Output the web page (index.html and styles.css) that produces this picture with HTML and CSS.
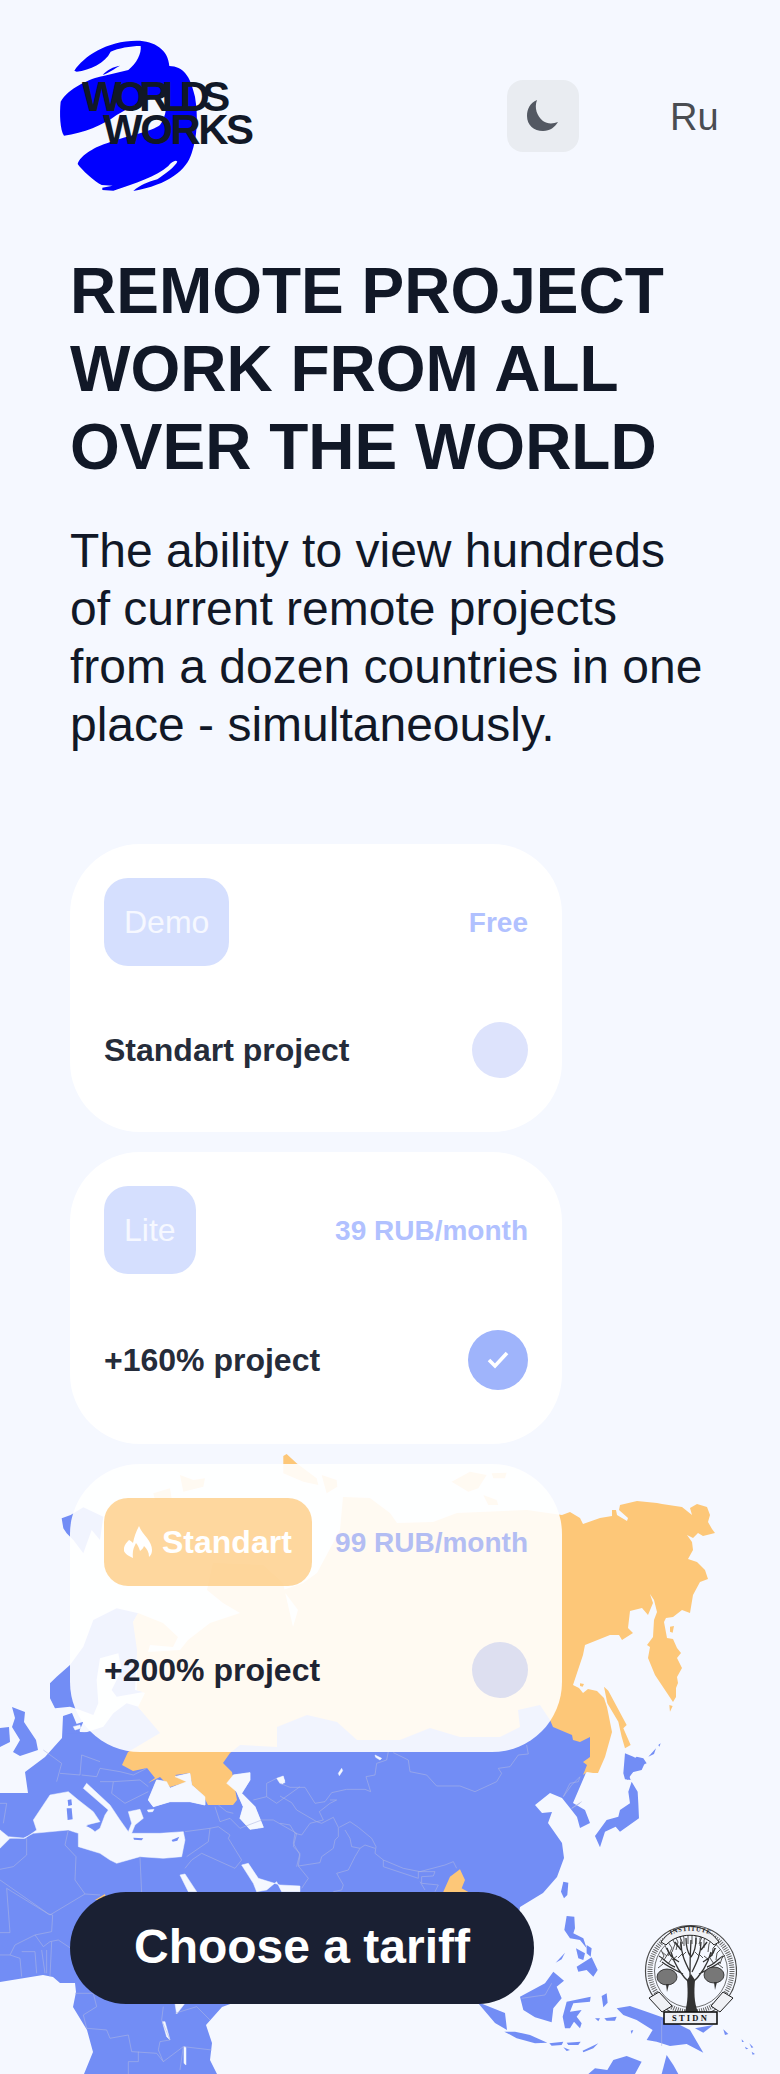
FILE: index.html
```html
<!DOCTYPE html>
<html lang="en">
<head>
<meta charset="utf-8">
<title>Worlds Works</title>
<link rel="stylesheet" href="styles.css">
</head>
<body>
<svg class="map" viewBox="0 0 780 2074" aria-hidden="true">
  <!-- land -->
  <g class="land">
    <path d="M0 1793L28 1793L25 1772L45 1757L62 1738L63 1716L72 1713L80 1732L110 1733L160 1700L590 1700L590 1760L585 1775L573 1803L585 1810L590 1823L580 1828L577 1817L570 1808L562 1798L550 1793L535 1805L542 1813L552 1812L548 1823L562 1843L564 1858L557 1877L543 1893L520 1907L505 1990L480 2003L505 2013L507 2030L495 2023L478 2003L233 2003L222 2007L206 2025L212 2043L210 2060L217 2074L84 2074L93 2052L87 2030L73 2007L76 1992L75 1983L60 1983L53 1977L43 1975L0 1982Z"/>
    <g transform="translate(50 1450) scale(.3333)">
      <path d="M0 700L20 680L60 645L100 590L130 510L200 475L265 490L250 515L262 590L255 720L285 725L200 740L185 720L215 660L205 610L150 625L140 690L145 760L130 795L90 780L60 770L15 775L0 745Z"/>
      <path d="M190 790L230 760L265 770L330 850L235 905L110 860L100 850L160 830Z"/>
      <path d="M35 205L62 195L100 172L160 200L150 270L125 240L100 310L70 270L50 250L40 235Z"/>
      <path d="M40 810L65 790L70 825L100 815L85 850L50 850Z"/>
    </g>
    <!-- UK, Ireland -->
    <path d="M12 1707L25 1712L24 1722L36 1740L38 1750L20 1756L13 1752L20 1740L12 1727L15 1718Z"/>
    <path d="M0 1728L9 1727L10 1742L0 1747Z"/>
    <g transform="translate(470 1760) scale(.3333)">
      <!-- Hokkaido and Japan -->
      <path d="M462 40L475 10L500 -10L520 -5L530 10L505 20L490 35L472 60Z"/>
      <path d="M485 65L503 95L505 130L507 175L450 215L437 200L405 215L390 262L375 228L410 180L445 170L450 150L480 130L475 95Z"/>
      <!-- Taiwan -->
      <path d="M280 365L295 368L292 405L282 415L273 395Z"/>
      <!-- Philippines -->
      <path d="M290 468L313 470L315 505L310 520L340 535L350 565L330 540L300 535L283 510Z"/>
      <path d="M318 565L345 580L340 600L325 595Z"/>
      <path d="M350 555L365 565L362 590L350 580Z"/>
      <path d="M320 620L365 592L383 630L370 650L350 630L325 635Z"/>
      <path d="M257 608L285 578L275 598Z"/>
      <!-- Borneo -->
      <path d="M150 710L225 670L250 635L282 662L260 680L275 715L250 745L245 787L195 772L160 750Z"/>
      <!-- Sulawesi -->
      <path d="M290 725L362 710L360 725L310 730L300 755L335 750L320 770L335 790L330 805L312 785L300 805L285 805L278 770Z"/>
      <path d="M395 708L410 700L413 728L400 742Z"/>
      <!-- New Guinea -->
      <path d="M440 745L480 738L530 755L600 780L660 810L700 878L650 852L600 858L560 845L530 840L548 810L500 780L460 765Z"/>
      <path d="M675 805L730 795L700 818Z"/>
      <!-- Java, lesser islands -->
      <path d="M103 815L135 815L180 825L232 848L195 850L140 835Z"/>
      <path d="M238 850L280 845L275 855L245 857Z"/>
      <path d="M290 848L332 845L325 855L295 855Z"/>
      <path d="M280 862L300 870L290 873Z"/>
      <path d="M338 872L385 850L370 865L340 877Z"/>
      <path d="M375 775L390 775L385 784Z"/>
      <path d="M403 775L440 770L435 782L410 782Z"/>
      <path d="M482 812L490 810L485 822Z"/>
      <path d="M760 808L775 822L765 825Z"/>
      <path d="M838 850L850 862L845 864Z"/>
      <path d="M825 860L835 866L828 868Z"/>
      <path d="M845 875L855 882L848 884Z"/>
      <path d="M815 838L822 845L816 846Z"/>
      <!-- Australia -->
      <path d="M355 942L375 925L412 930L430 900L470 888L515 905L495 942Z"/>
      <path d="M575 942L590 885L610 915L625 942Z"/>
    </g>
    <!-- Hokkaido tip -->
    <g transform="translate(530 1480) scale(.3333)">
      <path d="M285 820L310 830L345 848L335 870L295 880L302 900L285 898L280 880Z"/>
      <path d="M355 830L378 805L372 822Z"/>
      <path d="M385 795L392 790L388 800Z"/>
    </g>
  </g>

  <!-- seas -->
  <g class="sea">
    <g transform="translate(0 1750) scale(.3333)">
      <path d="M0 240L25 260L75 265L110 240L100 210L130 165L150 135L205 125L235 150L280 185L300 215L260 225L285 245L300 235L315 195L325 180L250 115L260 100L330 165L360 210L385 245L395 220L385 185L420 178L430 205L405 225L395 250L480 250L550 245L555 270L545 320L490 325L420 320L350 340L330 330L300 310L235 290L235 250L205 240L100 250L70 265L30 265L0 295Z"/>
      <path d="M445 150L470 90L500 95L510 115L560 95L525 80L570 70L575 105L615 140L615 165L570 155L510 155L460 170Z"/>
      <path d="M680 100L700 75L750 68L750 90L725 130L765 170L790 232L750 238L720 205L730 170L710 125Z"/>
      <path d="M540 375L555 372L590 425L565 425Z"/>
      <path d="M525 760L555 760L530 792Z"/>
      <path d="M725 345L745 340L775 385L840 405L900 408L900 425L845 425L830 395L800 420L770 425L760 400Z"/>
      <path d="M830 85L850 78L855 98L840 100Z"/>
      <path d="M442 180L462 178L458 185L445 186Z"/>
      <path d="M487 815L495 815L510 870L500 860Z" />
      <path d="M552 890L558 892L558 945L552 940Z"/>
    </g>
    <g transform="translate(280 1740) scale(.3333)">
      <path d="M285 45L305 55L300 60L287 52Z"/>
      <path d="M175 100L185 85L188 92L178 107Z"/>
      <path d="M0 115L8 110L14 122L8 132L0 130Z"/>
    </g>
    <!-- Baltic details -->
    <g transform="translate(50 1450) scale(.3333)">
      <path d="M70 830L90 825L92 835L75 840Z"/>
    </g>
  </g>

  <!-- islands in the seas -->
  <g class="land">
    <g transform="translate(0 1750) scale(.3333)">
      <path d="M203 150L214 148L216 165L205 168Z"/>
      <path d="M200 175L215 175L218 208L203 210Z"/>
      <path d="M258 228L295 220L285 240Z"/>
      <path d="M400 263L430 265L425 271L402 269Z"/>
      <path d="M515 270L538 260L532 272L518 275Z"/>
    </g>
  </g>

  <!-- Russia -->
  <g class="ru">
    <path d="M553 1727L550 1720L540 1705L518 1710L520 1727L500 1737L460 1737L430 1728L400 1740L357 1740L337 1722L307 1715L277 1727L277 1747L240 1745L230 1753L223 1763L232 1772L237 1800L233 1805L208 1805L203 1795L192 1785L190 1773L175 1775L187 1782L170 1787L160 1777L148 1783L155 1778L147 1768L133 1771L122 1765L128 1752L160 1733L138 1707L145 1693L137 1690L137 1650L133 1622L138 1613L163 1623L178 1637L173 1647L150 1645L148 1652L180 1650L188 1640L210 1623L240 1613L223 1603L207 1590L213 1563L263 1565L283 1583L293 1627L298 1610L283 1590L303 1583L317 1573L340 1530L343 1497L370 1498L390 1513L397 1523L433 1522L457 1513L527 1510L562 1515L570 1512L580 1518L583 1524L600 1518L612 1516L612 1510L616 1510L617 1515L627 1521L628 1518L619 1510L620 1505L637 1501L657 1503L662 1504L682 1507L692 1515L690 1508L697 1504L707 1507L710 1515L708 1522L712 1529L715 1533L703 1536L698 1533L693 1538L687 1535L692 1542L693 1550L688 1559L697 1562L705 1570L708 1579L700 1582L693 1595L690 1613L682 1610L673 1617L666 1618L664 1622L667 1638L673 1639L677 1648L681 1653L677 1658L682 1668L677 1677L678 1683L676 1688L676 1697L673 1702L667 1693L655 1675L648 1658L650 1647L647 1645L653 1637L654 1620L657 1612L654 1600L650 1594L653 1603L648 1615L642 1608L630 1611L628 1628L633 1633L622 1640L619 1635L610 1635L585 1645L583 1655L573 1685L579 1688L583 1693L588 1689L597 1691L604 1698L607 1707L612 1732L605 1757L598 1773L593 1773L587 1772L583 1775L587 1765L583 1762L590 1757L590 1737L580 1742L573 1740L572 1735Z"/>
    <g transform="translate(530 1480) scale(.3333)">
      <path d="M222 620L235 632L290 735L280 745L302 795L285 805L275 770L265 725L232 670Z"/>
      <path d="M150 610L162 612L158 620L150 618Z"/>
      <path d="M420 440L432 438L428 458L420 455Z"/>
      <path d="M418 675L428 678L420 695Z"/>
    </g>
    <g transform="translate(50 1450) scale(.3333)">
      <path d="M700 18L710 12L740 40L800 85L805 105L760 95L700 70Z"/>
      <path d="M815 75L860 90L862 110L830 130Z"/>
      <path d="M390 75L430 90L465 85L460 110L400 125Z"/>
      <path d="M310 130L360 115L365 145L315 150Z"/>
      <path d="M1205 95L1260 65L1310 75L1285 115L1255 125Z"/>
      <path d="M1325 70L1370 68L1365 85L1330 85Z"/>
      <path d="M1300 135L1340 150L1345 165L1315 165Z"/>
    </g>
    <!-- south Asian patch and a sliver at the button edge -->
    <g transform="translate(280 1740) scale(.3333)">
      <path d="M490 455L510 410L540 388L555 420L545 445L565 456L560 480L490 480Z"/>
    </g>
    <path d="M95 1900L105 1894L106 1900Z"/>
  </g>
  <!-- Caspian and Black Sea again over Russia -->
  <g class="sea">
    <g transform="translate(0 1750) scale(.3333)">
      <path d="M445 150L470 90L500 95L510 115L560 95L525 80L570 70L575 105L615 140L615 165L570 155L510 155L460 170Z"/>
      <path d="M680 100L700 75L750 68L750 90L725 130L765 170L790 232L750 238L720 205L730 170L710 125Z"/>
    </g>
  </g>

  <!-- borders -->
  <g class="borders">
    <g transform="translate(0 1750) scale(.3333)">
      <path d="M170 95L185 40L130 0M180 70L240 75L245 15L300 35M245 75L290 80L300 55L360 65M300 95L340 95L335 130L375 160L445 125M360 65L400 75L440 55M340 95L420 90L445 110M0 160L20 160L10 220"/>
      <path d="M80 265L80 315L40 350L0 358M205 240L195 285L228 320L225 390L255 432M0 390L150 495L255 432L300 435M20 415L30 548L0 548M20 415L145 492L158 495L155 545L105 555L45 585L30 615L0 615M420 320L425 430M30 615L60 625L65 680M65 605L105 605L110 670M125 600L135 670M105 555L130 590L150 575L175 570L220 600M140 600L140 670M155 575L150 680"/>
      <path d="M225 730L280 730L290 770L250 795L260 835L320 840L330 865L385 855L395 905L470 910L490 935L550 890L540 960M490 770L485 810L510 870L480 875L475 900L490 935M385 935L415 935L415 905M385 935L385 972M550 890L635 900M525 790L590 770L630 810"/>
      <path d="M555 245L630 235L625 275L560 320M630 235L655 230L690 255L685 265L725 330L705 355L605 310L575 330L555 355M645 170L660 215L690 205L720 235L785 210L820 210L890 250L880 290L900 310L890 350M760 150L800 140L800 100L830 85M800 140L830 160L900 110M655 165L680 185L700 190"/>
    </g>
    <g transform="translate(280 1740) scale(.3333)">
      <path d="M0 168L35 188L50 210L110 245L125 250L160 232L175 262L175 290L165 300L160 325L125 350L120 368L55 378L85 415L65 445M0 250L30 255L45 280L40 310L60 345L55 378M45 280L65 285L90 250L110 245M0 130L30 142L75 142L105 190L135 185L155 158L200 148L255 148L272 155L258 110L285 105L290 70L320 60L325 35"/>
      <path d="M110 245L130 240L118 215L150 190L170 180L150 180M178 262L210 245L235 262L275 295L288 320L285 340L310 360L370 385L420 395L495 375L520 365L530 385M195 270L210 295L215 320L240 325L225 350L205 390L170 400L190 435L185 450L160 455M240 325L255 315L285 325M310 360L310 380L415 415L415 395L465 395L460 408L425 410L425 430L475 435L465 455M420 425L435 450"/>
      <path d="M340 38L385 60L390 95L440 105L470 138L540 138L585 155L650 125L665 100L655 85L690 80L715 45L745 42L740 15M850 170L870 130L895 125L900 110M875 205L900 190"/>
    </g>
    <g transform="translate(470 1760) scale(.3333)">
      <path d="M280 110L305 75L330 50M305 145L335 125M155 715L225 705L245 670M575 780L575 858"/>
    </g>
  </g>
</svg>

<div class="page">
  <header class="header">
    <div class="logo">
      <svg class="logo-mark" viewBox="0 0 240 190" aria-hidden="true">
        <g transform="scale(.3333)">
          <path d="M103 152C130 110 200 62 290 62C345 62 385 90 388 138C430 140 450 165 465 230C475 290 472 350 455 400C440 450 385 495 280 513C300 495 325 485 352 478C375 462 405 440 412 425C408 418 395 425 385 438C350 470 285 490 220 512L187 510L187 503L218 497L185 495C165 485 125 450 113 432C120 405 170 378 205 368C270 345 335 335 360 315C380 290 385 240 370 225C330 235 280 255 230 285C190 315 130 340 72 347C60 330 58 280 62 245C85 205 150 175 190 168L265 150C290 130 305 100 302 78C270 78 235 85 212 95C195 130 150 150 110 155Z"/>
          <path d="M188 165C200 150 220 140 240 137C225 145 205 160 188 165Z"/>
        </g>
      </svg>
      <span class="logo-text"><span class="logo-line">WORLDS</span><span class="logo-line logo-line-2">WORKS</span></span>
    </div>
    <button class="theme" type="button" aria-label="Dark theme">
      <svg viewBox="0 0 32 32" width="32" height="32" aria-hidden="true"><path d="M10 0C3 3 0 9 0 16C0 25 7 31 16 31C23 31 28 27 31 22C26 24 20 24 16 21C10 16 7 8 10 0Z"/></svg>
    </button>
    <span class="lang">Ru</span>
  </header>

  <h1 class="title">REMOTE PROJECT<br>WORK FROM ALL<br>OVER THE WORLD</h1>
  <p class="lead">The ability to view hundreds<br>of current remote projects<br>from a dozen countries in one<br>place - simultaneously.</p>

  <section class="cards">
    <article class="card">
      <div class="row">
        <span class="badge">Demo</span>
        <span class="price">Free</span>
      </div>
      <div class="row row-b">
        <span class="feature">Standart project</span>
        <span class="dot"></span>
      </div>
    </article>
    <article class="card">
      <div class="row">
        <span class="badge">Lite</span>
        <span class="price">39 RUB/month</span>
      </div>
      <div class="row row-b">
        <span class="feature">+160% project</span>
        <span class="dot dot-on">
          <svg viewBox="0 0 22 18" width="22" height="18" aria-hidden="true"><path d="M2 9L8 15L20 2"/></svg>
        </span>
      </div>
    </article>
    <article class="card card-hot">
      <div class="row">
        <span class="badge badge-hot">
          <svg viewBox="0 0 28 32" width="28" height="32" aria-hidden="true"><path d="M15 0C17 5 20 8 23 12C26 16 28 20 28 24C28 27 27 29 25 31C25 26 23 23 20 20C19 23 17 24 16 25C15 22 14 19 12 17C10 21 8 25 9 32C5 30 1 28 0 25C-1 21 2 17 5 14C7 15 8 16 9 17C10 11 12 6 15 0Z"/></svg>
          Standart
        </span>
        <span class="price">99 RUB/month</span>
      </div>
      <div class="row row-b">
        <span class="feature">+200% project</span>
        <span class="dot"></span>
      </div>
    </article>
  </section>

  <footer class="footer">
    <button class="cta" type="button">Choose a tariff</button>
    <svg class="seal" viewBox="0 0 93 103" aria-label="Institute seal">
      <defs><path id="seal-arc" d="M19 17C34 6 58 6 74 17"/></defs>
      <circle class="seal-ring" cx="47" cy="49" r="45.5"/>
      <circle class="seal-dash" cx="47" cy="49" r="41"/>
      <circle class="seal-ring seal-thin" cx="47" cy="49" r="36.5"/>
      <path class="seal-twig" d="M16 40L20 34L17 28M20 38L25 30L21 24M24 34L28 26L24 20M28 30L31 22L28 16M32 28L34 20L31 14M36 26L37 18L35 12M40 24L40 16L38 11M44 22L44 14L42 10M48 22L48 12L50 9M52 22L52 14L54 10M56 24L56 16L59 11M60 26L60 18L63 13M64 30L65 22L68 17M68 34L69 26L73 22M72 38L73 31L77 27M76 42L78 36L81 33M14 46L19 42M79 46L74 42M18 30L23 34M28 36L24 42M66 36L70 42M33 34L28 38M60 34L65 38M38 32L34 36M55 32L59 36M42 30L38 34M51 30L55 34M30 20L34 25M36 15L39 22M58 15L55 22M63 20L59 25M22 26L26 32M72 26L67 32"/>
      <path class="seal-branch" d="M47 80C46 65 45 50 47 18M47 62C39 55 31 45 27 30M47 62C55 55 63 45 67 30M46 50C41 40 37 32 37 20M48 50C53 40 57 32 57 20M39 52C31 48 23 44 18 40M55 52C63 48 71 44 76 40M35 40C29 36 25 34 23 26M59 40C65 36 69 34 71 26M47 35C43 30 42 24 42 16M47 35C51 30 52 24 52 16M31 45C25 44 19 36 15 34M63 45C69 44 75 36 79 34M37 28L31 20M57 28L63 20"/>
      <path class="seal-trunk" d="M41 90C44 80 44 70 43 58L47 52L51 58C50 70 50 80 54 90C61 91 63 92 65 92L29 92C31 92 35 91 41 90Z"/>
      <ellipse class="seal-fruit" cx="23" cy="55" rx="10" ry="8"/>
      <ellipse class="seal-fruit" cx="70" cy="53" rx="10" ry="8"/>
      <path class="seal-trunk" d="M22 62L23 70L25 62ZM70 60L71 68L73 60Z"/>
      <path class="seal-ribbon" d="M17 20C32 -1 60 -1 75 20L70 23C58 10 34 10 22 23Z"/>
      <text class="seal-top"><textPath href="#seal-arc" startOffset="50%" text-anchor="middle">INSTITUTE</textPath></text>
      <path class="seal-ribbon" d="M5 76L15 70L28 84L18 90ZM89 76L79 70L67 84L76 90Z"/>
      <rect class="seal-plate" x="20" y="90" width="53" height="12"/>
      <text class="seal-bottom" x="46.500" y="99" text-anchor="middle">STIDN</text>
    </svg>
  </footer>
</div>
</body>
</html>
```

FILE: styles.css
```css
* { box-sizing: border-box; }
html, body { margin: 0; padding: 0; }
body {
  position: relative;
  width: 780px;
  height: 2074px;
  overflow: hidden;
  background: #f5f8ff;
  color: #111827;
  font-family: "Liberation Sans", Arial, sans-serif;
}
.map { position: absolute; left: 0; top: 0; width: 780px; height: 2074px; }
.land path { fill: #728df5; }
.sea path { fill: #f5f8ff; stroke: #f5f8ff; stroke-width: 1.5; stroke-linejoin: round; }
.ru path { fill: #fdc778; }
.borders path { fill: none; stroke: #aeb7e2; stroke-width: 1.7; stroke-linejoin: round; }

.page { position: relative; padding: 40px 0 0 70px; }

.header { display: flex; align-items: flex-start; height: 150px; }
.logo { position: relative; width: 240px; height: 150px; margin-left: -10px; }
.logo-mark { position: absolute; left: -20px; top: -20px; width: 240px; height: 190px; fill: #0000ff; }
.logo-text { position: absolute; left: 22px; top: 40px; font-size: 42px; font-weight: 700; line-height: 33px; color: #111827; }
.logo-line { display: block; letter-spacing: -7.7px; white-space: nowrap; }
.logo-line-2 { margin-left: 21px; letter-spacing: -2.5px; }
.theme { display: flex; align-items: center; justify-content: center; width: 72px; height: 72px; margin: 40px 0 0 207px; padding: 0; border: 0; border-radius: 16px; background: #e9ecf1; }
.theme svg { fill: #535862; }
.lang { margin: 54px 0 0 91px; font-size: 38px; line-height: 46px; color: #4a4d52; }

.title { margin: 62px 0 0; font-size: 64px; font-weight: 700; line-height: 78px; }
.lead { margin: 36px 0 0; font-size: 48px; line-height: 58px; }

.cards { display: flex; flex-direction: column; gap: 20px; margin-top: 90px; width: 492px; }
.card { padding: 34px 34px 54px; border-radius: 70px; background: #fff; }
.card-hot { background: rgba(255, 255, 255, .9); }
.row { display: flex; align-items: center; justify-content: space-between; }
.row-b { margin-top: 56px; }
.badge { display: flex; align-items: center; gap: 10px; height: 88px; padding: 0 20px; border-radius: 24px; background: #d5dffe; color: #f6f8ff; font-size: 32px; }
.badge-hot { background: rgba(253, 199, 120, .72); color: #fff; font-weight: 700; }
.badge-hot svg { fill: #fff; flex: none; }
.price { padding-top: 2px; color: #b1c1ff; font-size: 28px; font-weight: 700; }
.card-hot .price { color: #b3bdf3; }
.feature { color: #252c3a; font-size: 32px; font-weight: 700; }
.card-hot .feature { color: #1e2433; }
.dot { display: flex; align-items: center; justify-content: center; width: 56px; height: 56px; border-radius: 50%; background: #dde3fc; }
.card-hot .dot { background: #dddff0; }
.dot-on { width: 60px; height: 60px; background: #9fb4fb; }
.dot-on svg { fill: none; stroke: #fff; stroke-width: 3.6; }

.footer { display: flex; align-items: flex-start; margin-top: 140px; }
.cta { width: 464px; height: 112px; padding: 0 0 4px; border: 0; border-radius: 56px; background: #1a2033; color: #fff; font-family: inherit; font-size: 48px; font-weight: 700; }
.seal { width: 93px; height: 103px; margin: 30px 0 0 110px; flex: none; }
.seal-ring { fill: none; stroke: #4b4b4b; stroke-width: 1.2; }
.seal-thin { stroke-width: .8; }
.seal-dash { fill: none; stroke: #666; stroke-width: 5; stroke-dasharray: 1 1.2; }
.seal-branch { fill: none; stroke: #333; stroke-width: 1.3; }
.seal-twig { fill: none; stroke: #555; stroke-width: 1; }
.seal-trunk { fill: #333; }
.seal-fruit { fill: #777; stroke: #222; stroke-width: .8; }
.seal-ribbon { fill: #f0f1f5; stroke: #222; stroke-width: 1; }
.seal-plate { fill: #eef0f6; stroke: #111; stroke-width: 1.6; }
.seal-top { font: 700 6.500px "Liberation Serif", serif; letter-spacing: .6px; fill: #222; }
.seal-bottom { font: 700 8.500px "Liberation Serif", serif; letter-spacing: 2.2px; fill: #111; }
```
